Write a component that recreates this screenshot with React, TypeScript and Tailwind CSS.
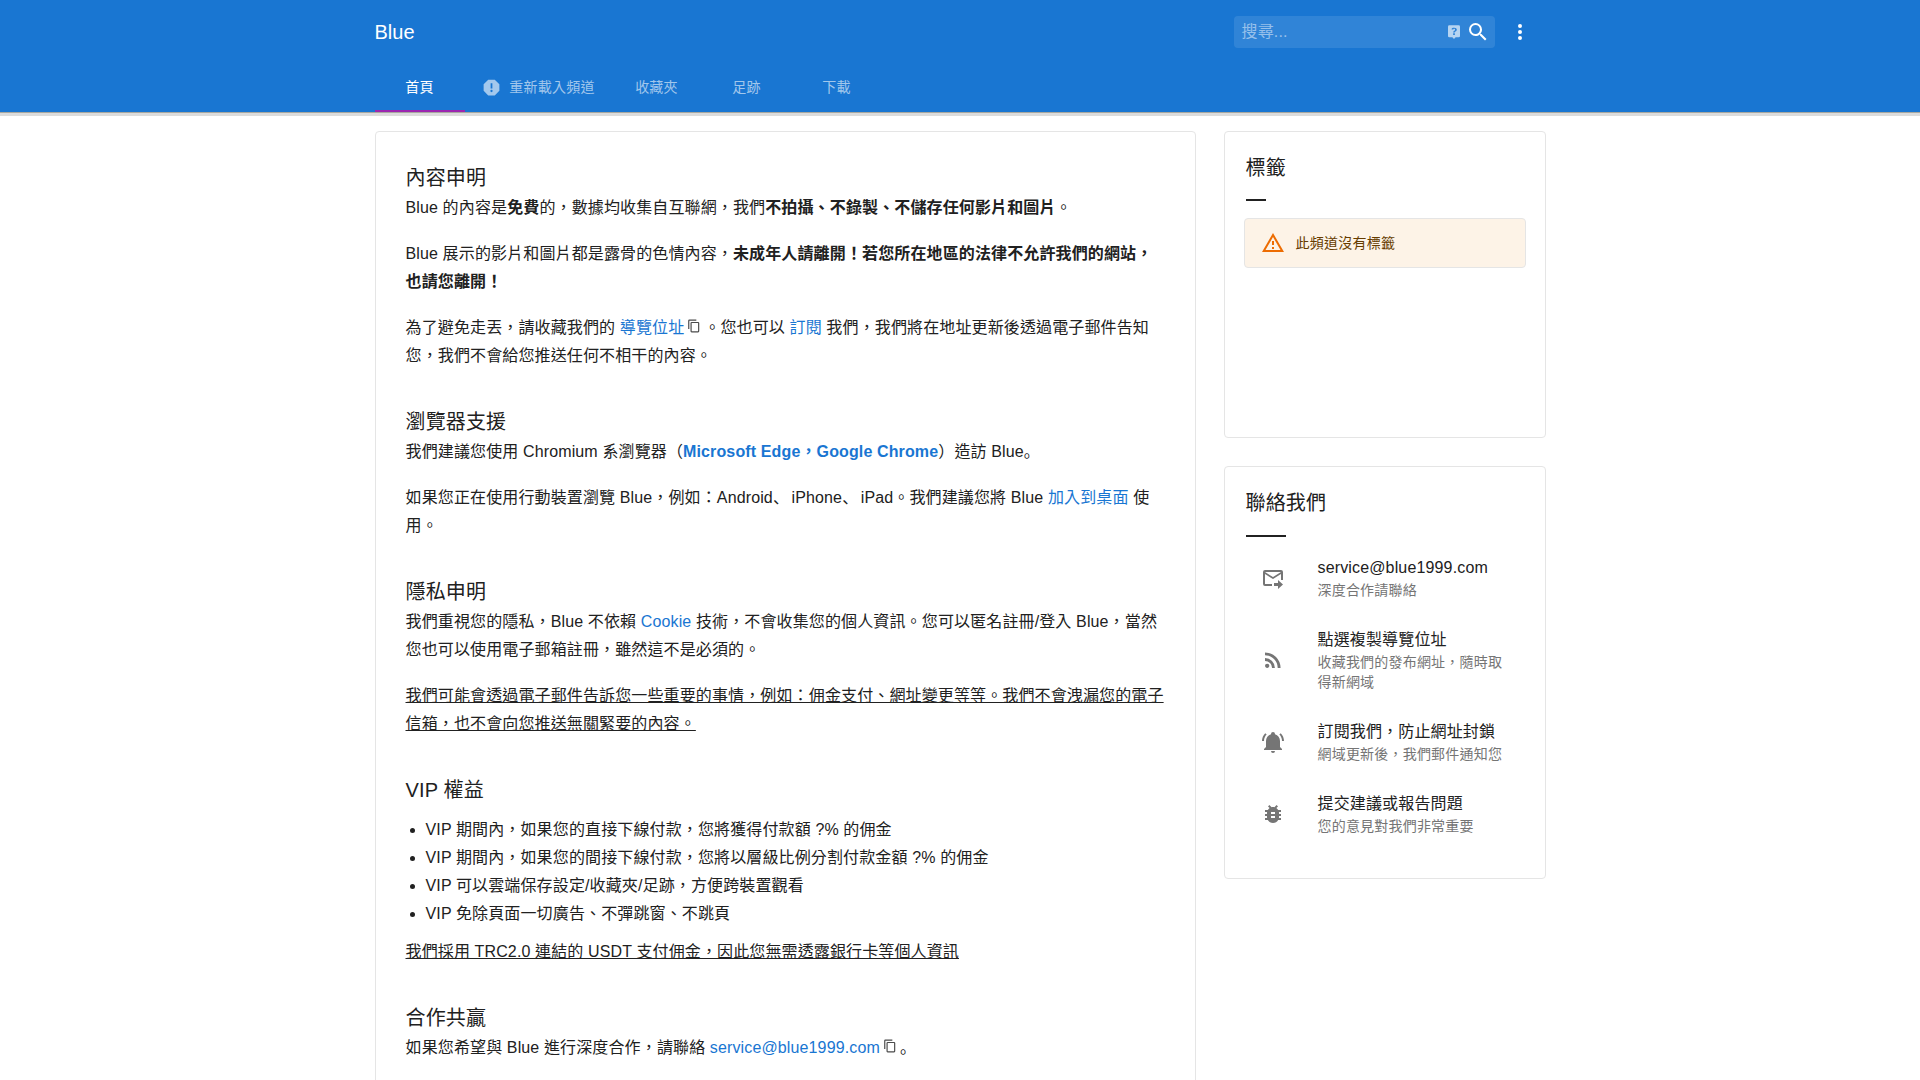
const FONT = "font-['Liberation_Sans','Noto_Sans_CJK_TC',sans-serif]";

function Icon({ d, className }: { d: string; className?: string }) {
  return (
    <svg viewBox="0 0 24 24" fill="currentColor" fillRule="evenodd" className={className}>
      <path d={d} />
    </svg>
  );
}

const P = {
  octagon: "M13,13H11V7H13V13M12,17.3A1.3,1.3 0 0,1 10.7,16A1.3,1.3 0 0,1 12,14.7A1.3,1.3 0 0,1 13.3,16A1.3,1.3 0 0,1 12,17.3M15.73,3H8.27L3,8.27V15.73L8.27,21H15.73L21,15.73V8.27L15.73,3Z",
  question: "M12.19,5.5C11.3,5.5 10.59,5.68 10.05,6.04C9.5,6.4 9.22,7 9.27,7.69H11.24C11.24,7.41 11.34,7.2 11.5,7.06C11.7,6.92 11.92,6.85 12.19,6.85C12.5,6.85 12.77,6.93 12.95,7.11C13.13,7.28 13.22,7.5 13.22,7.8C13.22,8.08 13.14,8.33 13,8.54C12.83,8.76 12.62,8.94 12.36,9.08C11.84,9.4 11.5,9.68 11.29,9.92C11.1,10.16 11,10.5 11,11H13C13,10.72 13.05,10.5 13.14,10.32C13.23,10.15 13.4,10 13.66,9.85C14.12,9.64 14.5,9.36 14.79,9C15.08,8.63 15.23,8.24 15.23,7.8C15.23,7.1 14.96,6.54 14.42,6.12C13.88,5.71 13.13,5.5 12.19,5.5M11,12V14H13V12H11Z",
  magnify: "M9.5,3A6.5,6.5 0 0,1 16,9.5C16,11.11 15.41,12.59 14.44,13.73L14.71,14H15.5L20.5,19L19,20.5L14,15.5V14.71L13.73,14.44C12.59,15.41 11.11,16 9.5,16A6.5,6.5 0 0,1 3,9.5A6.5,6.5 0 0,1 9.5,3M9.5,5C7,5 5,7 5,9.5C5,12 7,14 9.5,14C12,14 14,12 14,9.5C14,7 12,5 9.5,5Z",
  dots: "M12,16A2,2 0 0,1 14,18A2,2 0 0,1 12,20A2,2 0 0,1 10,18A2,2 0 0,1 12,16M12,10A2,2 0 0,1 14,12A2,2 0 0,1 12,14A2,2 0 0,1 10,12A2,2 0 0,1 12,10M12,4A2,2 0 0,1 14,6A2,2 0 0,1 12,8A2,2 0 0,1 10,6A2,2 0 0,1 12,4Z",
  copy: "M19,21H8V7H19V21M19,5H8A2,2 0 0,0 6,7V21A2,2 0 0,0 8,23H19A2,2 0 0,0 21,21V7A2,2 0 0,0 19,5M16,1H4A2,2 0 0,0 2,3V17H4V3H16V1Z",
  alert: "M12,2L1,21H23L12,2M12,6L19.53,19H4.47L12,6M11,10V14H13V10H11M11,16V18H13V16H11Z",
  mail: "M13 17H17V14L22 18.5L17 23V20H13V17M20 4H4A2 2 0 0 0 2 6V18A2 2 0 0 0 4 20H11V18H4V8L12 13L20 8V14H22V6A2 2 0 0 0 20 4M12 11L4 6H20L12 11Z",
  rss: "M6.18,15.64A2.18,2.18 0 0,1 8.36,17.82C8.36,19 7.38,20 6.18,20C5,20 4,19 4,17.82A2.18,2.18 0 0,1 6.18,15.64M4,4.44A15.56,15.56 0 0,1 19.56,20H16.73A12.73,12.73 0 0,0 4,7.27V4.44M4,10.1A9.9,9.9 0 0,1 13.9,20H11.07A7.07,7.07 0 0,0 4,12.93V10.1Z",
  bell: "M21,19V20H3V19L5,17V11C5,7.9 7.03,5.17 10,4.29C10,4.19 10,4.1 10,4A2,2 0 0,1 12,2A2,2 0 0,1 14,4C14,4.1 14,4.19 14,4.29C16.97,5.17 19,7.9 19,11V17L21,19M14,21A2,2 0 0,1 12,23A2,2 0 0,1 10,21H14M19.75,3.19L18.33,4.61C20.04,6.3 21,8.6 21,11H23C23,8.07 21.84,5.25 19.75,3.19M1,11H3C3,8.6 3.96,6.3 5.67,4.61L4.25,3.19C2.16,5.25 1,8.07 1,11Z",
  bug: "M14,12H10V10H14V12M14,16H10V14H14V16M20,8H17.19C16.74,7.22 16.12,6.55 15.37,6.04L17,4.41L15.59,3L13.42,5.17C12.96,5.06 12.5,5 12,5C11.5,5 11.04,5.06 10.59,5.17L8.41,3L7,4.41L8.62,6.04C7.88,6.55 7.26,7.22 6.81,8H4V10H6.09C6.04,10.33 6,10.66 6,11V12H4V14H6V15C6,15.34 6.04,15.67 6.09,16H4V18H6.81C7.85,19.79 9.78,21 12,21C14.22,21 16.15,19.79 17.19,18H20V16H17.91C17.96,15.67 18,15.34 18,15V14H20V12H18V11C18,10.66 17.96,10.33 17.91,10H20V8Z",
};

function HelpIcon() {
  return (
    <svg viewBox="0 0 24 24" className="ml-auto h-4 w-4">
      <path d="M5,2H19A2,2 0 0,1 21,4V18A2,2 0 0,1 19,20H14.5L12,22.5L9.5,20H5A2,2 0 0,1 3,18V4A2,2 0 0,1 5,2Z" fill="#ffffff" fillOpacity="0.65" />
      <g transform="translate(12 11) scale(1.3) translate(-12 -9.75)">
        <path d={P.question} fill="#2f82d6" />
      </g>
    </svg>
  );
}

function Tab({ label, active, icon }: { label: string; active?: boolean; icon?: boolean }) {
  return (
    <div
      className={
        "relative flex h-12 items-center justify-center pb-0.5 text-sm tracking-[0.25px] " +
        (icon ? "w-[147px] " : "w-[90px] ") +
        (active ? "text-white" : "text-white/60")
      }
    >
      {icon && <Icon d={P.octagon} className="mr-[7px] h-[21px] w-[21px]" />}
      {label}
      {active && <span className="absolute inset-x-0 bottom-0 h-0.5 bg-[#9c27b0]" />}
    </div>
  );
}

function H({ children, first }: { children: React.ReactNode; first?: boolean }) {
  return <h2 className={"text-xl leading-8 text-[#212121] tracking-[0.15px] " + (first ? "" : "mt-9")}>{children}</h2>;
}

function A({ children }: { children: React.ReactNode }) {
  return <span className="text-[#1976d2]">{children}</span>;
}

function Sc({ children }: { children: React.ReactNode }) {
  return <span className="font-['Noto_Sans_CJK_SC',sans-serif] leading-none">{children}</span>;
}

function Dun() {
  return <span className="mr-[2.5px] font-['Noto_Sans_CJK_SC',sans-serif] leading-none">、</span>;
}

function Copy() {
  return <Icon d={P.copy} className="relative -top-[3px] mx-[3px] inline-block h-3.5 w-3.5 text-[#4a4a4a]" />;
}

function Item({ icon, title, sub, tall }: { icon: string; title: string; sub: React.ReactNode; tall?: boolean }) {
  return (
    <div className={"flex items-center pl-4 pr-4 " + (tall ? "h-[92px]" : "h-[72px]")}>
      <Icon d={icon} className="h-6 w-6 shrink-0 text-[#757575]" />
      <div className="ml-[33px] min-w-0">
        <div className="text-base leading-6 tracking-[0.15px] text-[#212121]">{title}</div>
        <div className="text-sm leading-5 tracking-[0.2px] text-[#757575]">{sub}</div>
      </div>
    </div>
  );
}

export default function App() {
  return (
    <div className={"h-screen overflow-hidden bg-white " + FONT}>
      <header className="relative z-10 h-28 bg-[#1976d2] shadow-[0_1px_0_#a8a8a0,0_4px_0_#dcdcdc]">
        <div className="mx-auto w-[1171px]">
          <div className="flex h-16 items-center">
            <div className="text-xl text-white">Blue</div>
            <div className="ml-auto mr-[13px] flex h-8 w-[261px] items-center rounded bg-white/10 pl-2 pr-[5px]">
              <span className="text-base tracking-[0.15px] text-white/50">搜尋...</span>
              <HelpIcon />
              <Icon d={P.magnify} className="ml-1 h-6 w-6 text-white" />
            </div>
            <Icon d={P.dots} className="mr-[14px] h-6 w-6 text-white" />
          </div>
          <nav className="flex h-12">
            <Tab label="首頁" active />
            <Tab label="重新載入頻道" icon />
            <Tab label="收藏夾" />
            <Tab label="足跡" />
            <Tab label="下載" />
          </nav>
        </div>
      </header>

      <main className="mx-auto mt-[19px] flex w-[1171px] items-start gap-[28px]">
        <section className="w-[821px] shrink-0 rounded border border-[#e5e5e5] pl-[30px] pr-[29px] pt-[30px] text-base leading-7 tracking-[0.13px] text-[#212121]">
          <H first>內容申明</H>
          <p>Blue 的內容是<b>免費</b>的，數據均收集自互聯網，我們<b>不拍攝、不錄製、不儲存任何影片和圖片</b>。</p>
          <p className="mt-[18px]">Blue 展示的影片和圖片都是露骨的色情內容，<b>未成年人請離開！若您所在地區的法律不允許我們的網站，也請您離開！</b></p>
          <p className="mt-[18px]">為了避免走丟，請收藏我們的 <A>導覽位址</A><Copy />。您也可以 <A>訂閱</A> 我們，我們將在地址更新後透過電子郵件告知您，我們不會給您推送任何不相干的內容。</p>

          <H>瀏覽器支援</H>
          <p>我們建議您使用 Chromium 系瀏覽器（<b className="text-[#1976d2]">Microsoft Edge，Google Chrome</b>）造訪 Blue<Sc>。</Sc></p>
          <p className="mt-[18px]">如果您正在使用行動裝置瀏覽 Blue，例如：Android<Dun />iPhone<Dun />iPad。我們建議您將 Blue <A>加入到桌面</A> 使用。</p>

          <H>隱私申明</H>
          <p>我們重視您的隱私，Blue 不依賴 <A>Cookie</A> 技術，不會收集您的個人資訊。您可以匿名註冊/登入 Blue，當然您也可以使用電子郵箱註冊，雖然這不是必須的。</p>
          <p className="mt-[18px] underline">我們可能會透過電子郵件告訴您一些重要的事情，例如：佣金支付、網址變更等等。我們不會洩漏您的電子信箱，也不會向您推送無關緊要的內容。</p>

          <H>VIP 權益</H>
          <ul className="mt-[10px] list-disc pl-5">
            <li>VIP 期間內，如果您的直接下線付款，您將獲得付款額 ?% 的佣金</li>
            <li>VIP 期間內，如果您的間接下線付款，您將以層級比例分割付款金額 ?% 的佣金</li>
            <li>VIP 可以雲端保存設定/收藏夾/足跡，方便跨裝置觀看</li>
            <li>VIP 免除頁面一切廣告、不彈跳窗、不跳頁</li>
          </ul>
          <p className="mt-[10px] underline">我們採用 TRC2.0 連結的 USDT 支付佣金，因此您無需透露銀行卡等個人資訊</p>

          <H>合作共贏</H>
          <p>如果您希望與 Blue 進行深度合作，請聯絡 <A>service@blue1999.com</A><Copy /><Sc>。</Sc></p>
          <div className="h-40" />
        </section>

        <aside className="flex w-[322px] shrink-0 flex-col gap-[28px]">
          <div className="h-[307px] rounded border border-[#e5e5e5] pl-[21px] pr-5 pt-5">
            <div className="text-xl leading-8 text-[#212121] tracking-[0.15px]">標籤</div>
            <div className="mt-[15px] h-0.5 w-5 bg-[#212121]" />
            <div className="ml-[-2px] mr-[-1px] mt-[17px] flex h-[50px] items-center rounded border border-[#e5e5e5] bg-[#fdf3e7] pb-px pl-4 text-sm tracking-[0.25px] text-[#663c00]">
              <Icon d={P.alert} className="mr-[11px] h-6 w-6 text-[#ed6c02]" />
              此頻道沒有標籤
            </div>
          </div>
          <div className="h-[413px] rounded border border-[#e5e5e5] pl-[21px] pr-5 pt-5">
            <div className="text-xl leading-8 text-[#212121] tracking-[0.15px]">聯絡我們</div>
            <div className="mt-4 h-0.5 w-10 bg-[#212121]" />
            <div className="mx-[-1px] mt-[5px]">
              <Item icon={P.mail} title="service@blue1999.com" sub="深度合作請聯絡" />
              <Item icon={P.rss} title="點選複製導覽位址" sub="收藏我們的發布網址，隨時取得新網域" tall />
              <Item icon={P.bell} title="訂閱我們，防止網址封鎖" sub="網域更新後，我們郵件通知您" />
              <Item icon={P.bug} title="提交建議或報告問題" sub="您的意見對我們非常重要" />
            </div>
          </div>
        </aside>
      </main>
    </div>
  );
}
